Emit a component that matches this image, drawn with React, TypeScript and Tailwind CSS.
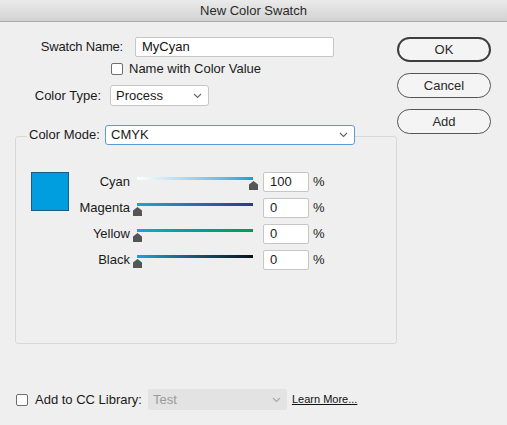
import React from 'react';

const font = { fontFamily: '"Liberation Sans", Arial, sans-serif' };

function Chevron({ color = '#666' }: { color?: string }) {
  return (
    <svg width="9" height="6" viewBox="0 0 9 6" className="shrink-0">
      <path d="M1 1 L4.5 4.5 L8 1" fill="none" stroke={color} strokeWidth="1.1" />
    </svg>
  );
}

function Checkbox() {
  return <div className="w-[12px] h-[12px] border border-[#6f6f6f] rounded-[2px] bg-white shrink-0" />;
}

function Thumb() {
  return (
    <svg width="9" height="9" viewBox="0 0 9 9">
      <path d="M0 3.5 L4.5 0 L9 3.5 L9 9 L0 9 Z" fill="#555" />
    </svg>
  );
}

const sliders = [
  { name: 'Cyan', value: 100, track: 'bg-gradient-to-r from-[#ffffff] to-[#0a9fdc]' },
  { name: 'Magenta', value: 0, track: 'bg-gradient-to-r from-[#1aa2dc] to-[#2e3886]' },
  { name: 'Yellow', value: 0, track: 'bg-gradient-to-r from-[#1aa2dc] to-[#009a4c]' },
  { name: 'Black', value: 0, track: 'bg-gradient-to-r from-[#1aa2dc] to-[#08141c]' },
];

export default function App() {
  return (
    <div className="w-[507px] h-[425px] bg-[#efefef] text-[13px] text-[#1a1a1a] overflow-hidden" style={font}>
      {/* Title bar */}
      <div className="h-[22px] bg-gradient-to-b from-[#ebebeb] to-[#d2d2d2] border-b border-[#acacac] flex items-center justify-center text-[13px] text-[#2a2a2a]">
        New Color Swatch
      </div>

      <div className="flex pt-[15px]">
        {/* Left column */}
        <div className="w-[397px] flex flex-col">
          <div className="flex items-center h-[20px]">
            <div className="w-[123px] text-right tracking-[-0.2px]">Swatch Name:</div>
            <div className="ml-[12px] w-[199px] h-[20px] bg-white border border-[#c6c6c6] rounded-[2px] flex items-center pl-[6px] text-[#111]">
              MyCyan
            </div>
          </div>

          <div className="flex items-center h-[16px] mt-[4px] pl-[111px]">
            <Checkbox />
            <span className="ml-[6px]">Name with Color Value</span>
          </div>

          <div className="flex items-center h-[21px] mt-[8px]">
            <div className="w-[101px] text-right">Color Type:</div>
            <div className="ml-[9px] w-[99px] h-[21px] bg-white border border-[#c6c6c6] rounded-[3px] flex items-center justify-between pl-[5px] pr-[6px]">
              <span>Process</span>
              <Chevron />
            </div>
          </div>

          {/* Color mode group */}
          <div className="ml-[15px] mt-[30px] w-[382px] h-[208px] border border-[#d8d8d8] rounded-[3px]">
            <div className="-mt-[12px] ml-[11px] flex items-center h-[20px]">
              <span className="bg-[#efefef] w-[78px] pl-[2px] leading-[20px]">Color Mode:</span>
              <div className="w-[250px] h-[20px] bg-white border border-[#5d9ad6] rounded-[3px] flex items-center justify-between pl-[5px] pr-[6px]">
                <span>CMYK</span>
                <Chevron />
              </div>
            </div>

            <div className="flex pl-[15px] mt-[27px]">
              <div className="w-[38px] h-[39px] bg-[#009ddf] border border-[#1d5b7d] shrink-0" />
              <div className="flex flex-col gap-[6px]">
                {sliders.map((s) => (
                  <div key={s.name} className="flex items-center h-[20px]">
                    <div className="w-[61px] text-right">{s.name}</div>
                    <div className="ml-[7px] w-[116px] h-[20px] relative">
                      <div className={`absolute left-0 right-0 top-[5px] h-[3px] ${s.track}`} />
                      <div className="absolute top-[9px]" style={{ left: (s.value / 100) * 116 - 4 }}>
                        <Thumb />
                      </div>
                    </div>
                    <div className="ml-[10px] w-[46px] h-[20px] bg-white border border-[#c6c6c6] rounded-[2px] flex items-center pl-[6px]">
                      {s.value}
                    </div>
                    <span className="ml-[4px]">%</span>
                  </div>
                ))}
              </div>
            </div>
          </div>

          {/* Bottom row */}
          <div className="flex items-center h-[21px] mt-[45px] pl-[16px]">
            <Checkbox />
            <span className="ml-[7px]">Add to CC Library:</span>
            <div className="ml-[6px] w-[139px] h-[21px] bg-[#e3e3e3] rounded-[2px] flex items-center justify-between pl-[5px] pr-[6px] text-[#9a9a9a]">
              <span>Test</span>
              <Chevron color="#a8a8a8" />
            </div>
            <span className="ml-[5px] text-[11px] underline text-[#111]">Learn More...</span>
          </div>
        </div>

        {/* Buttons */}
        <div className="w-[94px] flex flex-col gap-[11px]">
          <button className="h-[25px] rounded-full border-2 border-[#3e3e3e] bg-[#f4f4f4] text-[#2a2a2a]">OK</button>
          <button className="h-[25px] rounded-full border border-[#555] bg-[#f4f4f4] text-[#2a2a2a]">Cancel</button>
          <button className="h-[25px] rounded-full border border-[#555] bg-[#f4f4f4] text-[#2a2a2a]">Add</button>
        </div>
      </div>
    </div>
  );
}
